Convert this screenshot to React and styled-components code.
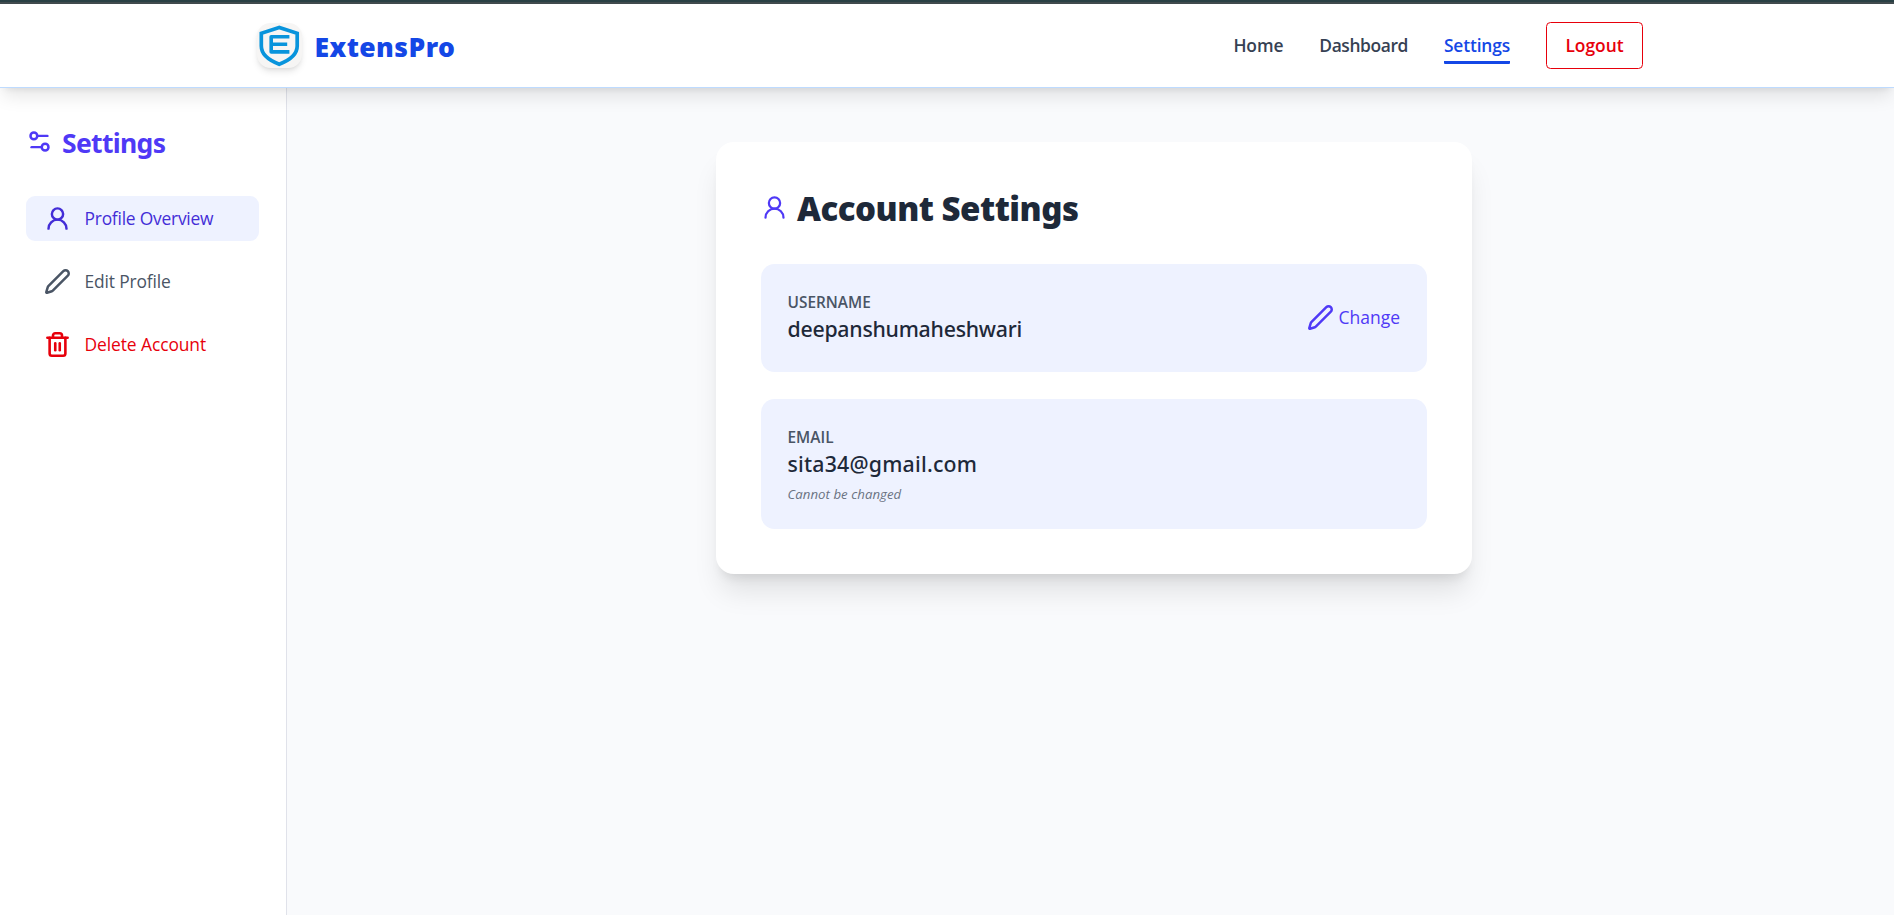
import React from 'react';
import styled, { createGlobalStyle, css } from 'styled-components';
import { Pen, Settings2, Trash2, UserRound } from 'lucide-react';

const GlobalStyle = createGlobalStyle`
  *, *::before, *::after { box-sizing: border-box; }
  body {
    margin: 0;
    background: #fff;
    color: #1e2939;
    font-family: "Noto Sans", "Open Sans", sans-serif;
  }
  h1, h2, p { margin: 0; }
`;

const Page = styled.div`
  display: flex;
  flex-direction: column;
  height: 100vh;
  overflow: hidden;
`;

const TopStrip = styled.div`
  flex: none;
  height: 4px;
  background: linear-gradient(#294044 50%, #414b4e 50%);
`;

const Header = styled.header`
  position: relative;
  z-index: 1;
  flex: none;
  display: flex;
  align-items: center;
  justify-content: space-between;
  height: 84px;
  padding: 0 251px 0 257px;
  background: #fff;
  border-bottom: 1px solid #bedbff;
  box-shadow: 0 11px 17px -3.4px rgb(0 0 0 / 0.1), 0 4.5px 7px -4.5px rgb(0 0 0 / 0.1);
`;

const Brand = styled.div`
  display: flex;
  align-items: center;
  gap: 12.5px;
`;

const LogoTile = styled.div`
  width: 45px;
  height: 45px;
  border-radius: 13.5px;
  background: #f6f5f4;
  box-shadow: 0 4.5px 7px -1px rgb(0 0 0 / 0.1), 0 2px 4.5px -2px rgb(0 0 0 / 0.1);

  svg { display: block; }
`;

const BrandName = styled.span`
  padding-top: 3px;
  color: #1447e6;
  font-size: 26.5px;
  font-weight: 900;
  line-height: 36px;
  letter-spacing: 0.45px;
`;

const Nav = styled.nav`
  display: flex;
  align-items: center;
  gap: 36px;
`;

const NavLink = styled.a`
  padding: 5px 0 2px;
  border-bottom: 3px solid ${({ $active }) => ($active ? '#1447e6' : 'transparent')};
  border-radius: 1px;
  color: ${({ $active }) => ($active ? '#1447e6' : '#364153')};
  font-family: "Open Sans", sans-serif;
  font-size: 17.4px;
  font-weight: 600;
  line-height: 27px;
  letter-spacing: ${({ $tracking }) => $tracking};
`;

const LogoutButton = styled.button`
  width: 97px;
  height: 47px;
  padding: 0;
  border: 1px solid #e7000b;
  border-radius: 4.5px;
  background: #fff;
  color: #e7000b;
  font: 600 17.4px/27px "Open Sans", sans-serif;
`;

const Body = styled.div`
  flex: 1;
  display: flex;
  min-height: 0;
`;

const Sidebar = styled.aside`
  flex: none;
  width: 287px;
  padding: 36px 27px 0 26px;
  border-right: 1px solid #e0e2ea;
  background: #fff;
`;

const SidebarTitle = styled.h2`
  display: flex;
  align-items: flex-start;
  gap: 9px;
  height: 36px;
  margin-bottom: 36px;
  padding-top: 1px;
  color: #4f39f6;
  font-size: 26.5px;
  font-weight: 700;
  line-height: 36px;
  letter-spacing: -0.66px;

  svg { margin-top: 3px; }
`;

const Menu = styled.div`
  display: flex;
  flex-direction: column;
  gap: 18px;
`;

const tones = {
  active: css`background: #eef2ff; color: #432dd7; letter-spacing: -0.22px;`,
  plain: css`color: #4a5565; letter-spacing: -0.15px;`,
  danger: css`color: #e7000b; letter-spacing: -0.08px;`,
};

const MenuItem = styled.a`
  display: flex;
  align-items: center;
  gap: 13.5px;
  height: 45px;
  padding: 0 18px;
  border-radius: 9px;
  font-family: "Open Sans", sans-serif;
  font-size: 17.4px;
  line-height: 27px;
  ${({ $tone }) => tones[$tone]}
`;

const Main = styled.main`
  flex: 1;
  display: flex;
  justify-content: center;
  align-items: flex-start;
  padding: 54px 0 0 7px;
  background: #f9fafc;
`;

const Card = styled.section`
  width: 756px;
  padding: 45px;
  border-radius: 18px;
  background: #fff;
  box-shadow: 0 22.5px 28px -5.6px rgb(0 0 0 / 0.1), 0 9px 11px -6.75px rgb(0 0 0 / 0.1);
`;

const CardTitle = styled.h1`
  display: flex;
  align-items: flex-start;
  gap: 9px;
  height: 41px;
  margin-bottom: 36px;
  padding-top: 1px;
  font-size: 33px;
  font-weight: 900;
  line-height: 41px;
  letter-spacing: -0.5px;

  svg {
    margin-top: 6px;
    color: #4f39f6;
  }
`;

const Fields = styled.div`
  display: flex;
  flex-direction: column;
  gap: 27px;
`;

const Field = styled.div`
  display: flex;
  align-items: center;
  justify-content: space-between;
  padding: 27px 27px 27px 26.5px;
  border-radius: 13.5px;
  background: #eef2ff;
`;

const FieldLabel = styled.p`
  padding-top: 1px;
  color: #4a5565;
  font-family: "Open Sans", sans-serif;
  font-size: 15.4px;
  font-weight: 600;
  line-height: 21px;
  letter-spacing: 0;
  text-transform: uppercase;
`;

const FieldValue = styled.p`
  font-size: 21.3px;
  font-weight: 500;
  line-height: 32px;
  letter-spacing: ${({ $tracking }) => $tracking};
`;

const FieldNote = styled.p`
  margin-top: 6px;
  margin-bottom: -1px;
  color: #6a7282;
  font-family: "Open Sans", sans-serif;
  font-size: 13.2px;
  font-style: italic;
  line-height: 17px;
  letter-spacing: 0.05px;
`;

const ChangeLink = styled.a`
  display: flex;
  align-items: center;
  gap: 4px;
  padding-bottom: 1px;
  color: #4f39f6;
  font-family: "Open Sans", sans-serif;
  font-size: 17.5px;
  line-height: 27px;
`;

const ShieldLogo = () => (
  <svg width="45" height="45" viewBox="0 0 45 45" fill="none" stroke="#0894dc">
    <path d="M22.2 4.4L4.3 10.300V23C4.3 32.5 12.5 37.5 22.2 41.2C31.900 37.5 40.200 32.5 40.200 23V10.300Z" strokeWidth="3.7" />
    <path d="M32.400 13.800H14.200V28.900H32.400M14.5 21.300H30.200" strokeWidth="3.6" strokeLinejoin="round" />
  </svg>
);

export default function App() {
  return (
    <Page>
      <GlobalStyle />
      <TopStrip />
      <Header>
        <Brand>
          <LogoTile><ShieldLogo /></LogoTile>
          <BrandName>ExtensPro</BrandName>
        </Brand>
        <Nav>
          <NavLink $tracking="-0.1px">Home</NavLink>
          <NavLink $tracking="-0.4px">Dashboard</NavLink>
          <NavLink $active $tracking="-0.16px">Settings</NavLink>
          <LogoutButton>Logout</LogoutButton>
        </Nav>
      </Header>
      <Body>
        <Sidebar>
          <SidebarTitle><Settings2 size={27} strokeWidth={2.2} />Settings</SidebarTitle>
          <Menu>
            <MenuItem $tone="active"><UserRound size={27} strokeWidth={2.2} />Profile Overview</MenuItem>
            <MenuItem $tone="plain"><Pen size={27} strokeWidth={2.2} />Edit Profile</MenuItem>
            <MenuItem $tone="danger"><Trash2 size={27} strokeWidth={2.3} />Delete Account</MenuItem>
          </Menu>
        </Sidebar>
        <Main>
          <Card>
            <CardTitle><UserRound size={27} />Account Settings</CardTitle>
            <Fields>
              <Field>
                <div>
                  <FieldLabel>Username</FieldLabel>
                  <FieldValue $tracking="-0.25px">deepanshumaheshwari</FieldValue>
                </div>
                <ChangeLink><Pen size={27} strokeWidth={2.2} />Change</ChangeLink>
              </Field>
              <Field>
                <div>
                  <FieldLabel>Email</FieldLabel>
                  <FieldValue $tracking="0.2px">sita34@gmail.com</FieldValue>
                  <FieldNote>Cannot be changed</FieldNote>
                </div>
              </Field>
            </Fields>
          </Card>
        </Main>
      </Body>
    </Page>
  );
}
